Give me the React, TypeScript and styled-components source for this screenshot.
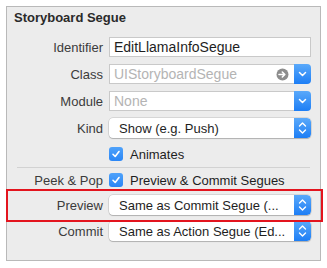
import styled, { createGlobalStyle } from "styled-components";

const GlobalStyle = createGlobalStyle`
  html, body {
    margin: 0;
    padding: 0;
    background: #ffffff;
  }
  body {
    font-family: "Liberation Sans", Arial, sans-serif;
    -webkit-font-smoothing: antialiased;
  }
`;

const Page = styled.div`
  position: relative;
  width: 327px;
  height: 268px;
  padding: 6px 0 0 6px;
  box-sizing: border-box;
`;

const Panel = styled.div`
  width: 315px;
  box-sizing: border-box;
  background: #ececec;
  border: 1px solid #b9b9b9;
  padding: 0 0 19px 0;
`;

const Title = styled.div`
  margin-top: 3px;
  padding-left: 7px;
  height: 16px;
  line-height: 16px;
  font-size: 13px;
  font-weight: bold;
  color: #2a2a2a;
`;

const Section = styled.div<{ $rows: string; $gap: number; $top: number }>`
  display: grid;
  grid-template-columns: 96px 202px;
  grid-template-rows: ${({ $rows }) => $rows};
  column-gap: 6px;
  row-gap: ${({ $gap }) => $gap}px;
  align-items: center;
  margin-top: ${({ $top }) => $top}px;
`;

const Label = styled.div`
  text-align: right;
  font-size: 13px;
  color: #3b3b3b;
  white-space: nowrap;
`;

const TextField = styled.div<{ $placeholder?: boolean }>`
  display: flex;
  align-items: center;
  height: 20px;
  box-sizing: border-box;
  background: #ffffff;
  border: 1px solid #c9c9c9;
  padding-left: 4px;
  font-size: 14px;
  color: ${({ $placeholder }) => ($placeholder ? "#b4b4b4" : "#1e1e1e")};
  white-space: nowrap;
  overflow: hidden;
`;

const ComboWrap = styled.div`
  display: flex;
  height: 20px;
`;

const ComboField = styled(TextField)`
  flex: 1;
  border-right: none;
  justify-content: space-between;
  padding-right: 5px;
`;

const BlueButton = styled.div<{ $rounded?: "right" | "all" }>`
  width: 17px;
  height: 100%;
  box-sizing: border-box;
  display: flex;
  align-items: center;
  justify-content: center;
  background: linear-gradient(#5aa9fa, #1d7ef5);
  border-radius: ${({ $rounded }) => ($rounded === "all" ? "0 4px 4px 0" : "0 4px 4px 0")};
`;

const Popup = styled.div`
  display: flex;
  height: 20px;
  box-sizing: border-box;
  background: #ffffff;
  border-radius: 4px;
  box-shadow: 0 0 0 0.5px rgba(0, 0, 0, 0.18), 0 1px 1px rgba(0, 0, 0, 0.18);
  overflow: hidden;
`;

const PopupText = styled.div`
  flex: 1;
  display: flex;
  align-items: center;
  padding-left: 10px;
  font-size: 13px;
  color: #1e1e1e;
  white-space: nowrap;
  overflow: hidden;
`;

const CheckRow = styled.div`
  display: flex;
  align-items: center;
  gap: 7px;
  font-size: 13px;
  color: #1e1e1e;
  white-space: nowrap;
`;

const CheckBox = styled.div`
  width: 14px;
  height: 14px;
  border-radius: 3px;
  background: linear-gradient(#4fa2fa, #2a86f6);
  display: flex;
  align-items: center;
  justify-content: center;
`;

const Separator = styled.div`
  margin: 4px 10px 0 10px;
  height: 1px;
  background: #d2d2d2;
`;

const Highlight = styled.div`
  position: absolute;
  left: 6px;
  top: 189px;
  width: 317px;
  height: 33px;
  box-sizing: border-box;
  border: 2.5px solid #e3141e;
`;

const Chevron = () => (
  <svg width="9" height="6" viewBox="0 0 9 6">
    <path d="M1.5 1.5 L4.5 4.5 L7.5 1.5" fill="none" stroke="#fff" strokeWidth="1.5" strokeLinecap="round" strokeLinejoin="round" />
  </svg>
);

const Stepper = () => (
  <svg width="9" height="14" viewBox="0 0 9 14">
    <path d="M1.5 5 L4.5 2 L7.5 5" fill="none" stroke="#fff" strokeWidth="1.4" strokeLinecap="round" strokeLinejoin="round" />
    <path d="M1.5 9 L4.5 12 L7.5 9" fill="none" stroke="#fff" strokeWidth="1.4" strokeLinecap="round" strokeLinejoin="round" />
  </svg>
);

const Check = () => (
  <svg width="10" height="10" viewBox="0 0 10 10">
    <path d="M2 5.3 L4.2 7.5 L8 2.5" fill="none" stroke="#fff" strokeWidth="1.6" strokeLinecap="round" strokeLinejoin="round" />
  </svg>
);

const GoArrow = () => (
  <svg width="13" height="13" viewBox="0 0 13 13">
    <circle cx="6.5" cy="6.5" r="6" fill="#8d8d8d" />
    <path d="M3 6.5 H8.5 M6.3 4 L8.8 6.5 L6.3 9" fill="none" stroke="#fff" strokeWidth="1.6" strokeLinecap="round" strokeLinejoin="round" />
  </svg>
);

const PopupField = ({ text }: { text: string }) => (
  <Popup>
    <PopupText>{text}</PopupText>
    <BlueButton>
      <Stepper />
    </BlueButton>
  </Popup>
);

export default function App() {
  return (
    <>
      <GlobalStyle />
      <Page>
        <Panel>
          <Title>Storyboard Segue</Title>

          <Section $rows="20px 20px 20px 20px 18px" $gap={7} $top={11}>
            <Label>Identifier</Label>
            <TextField>EditLlamaInfoSegue</TextField>

            <Label>Class</Label>
            <ComboWrap>
              <ComboField $placeholder>
                UIStoryboardSegue
                <GoArrow />
              </ComboField>
              <BlueButton>
                <Chevron />
              </BlueButton>
            </ComboWrap>

            <Label>Module</Label>
            <ComboWrap>
              <ComboField $placeholder>None</ComboField>
              <BlueButton>
                <Chevron />
              </BlueButton>
            </ComboWrap>

            <Label>Kind</Label>
            <PopupField text="Show (e.g. Push)" />

            <span />
            <CheckRow>
              <CheckBox>
                <Check />
              </CheckBox>
              Animates
            </CheckRow>
          </Section>

          <Separator />

          <Section $rows="18px 20px 20px" $gap={6} $top={3}>
            <Label>Peek &amp; Pop</Label>
            <CheckRow>
              <CheckBox>
                <Check />
              </CheckBox>
              Preview &amp; Commit Segues
            </CheckRow>

            <Label>Preview</Label>
            <PopupField text="Same as Commit Segue (..." />

            <Label>Commit</Label>
            <PopupField text="Same as Action Segue (Ed..." />
          </Section>
        </Panel>
        <Highlight />
      </Page>
    </>
  );
}
